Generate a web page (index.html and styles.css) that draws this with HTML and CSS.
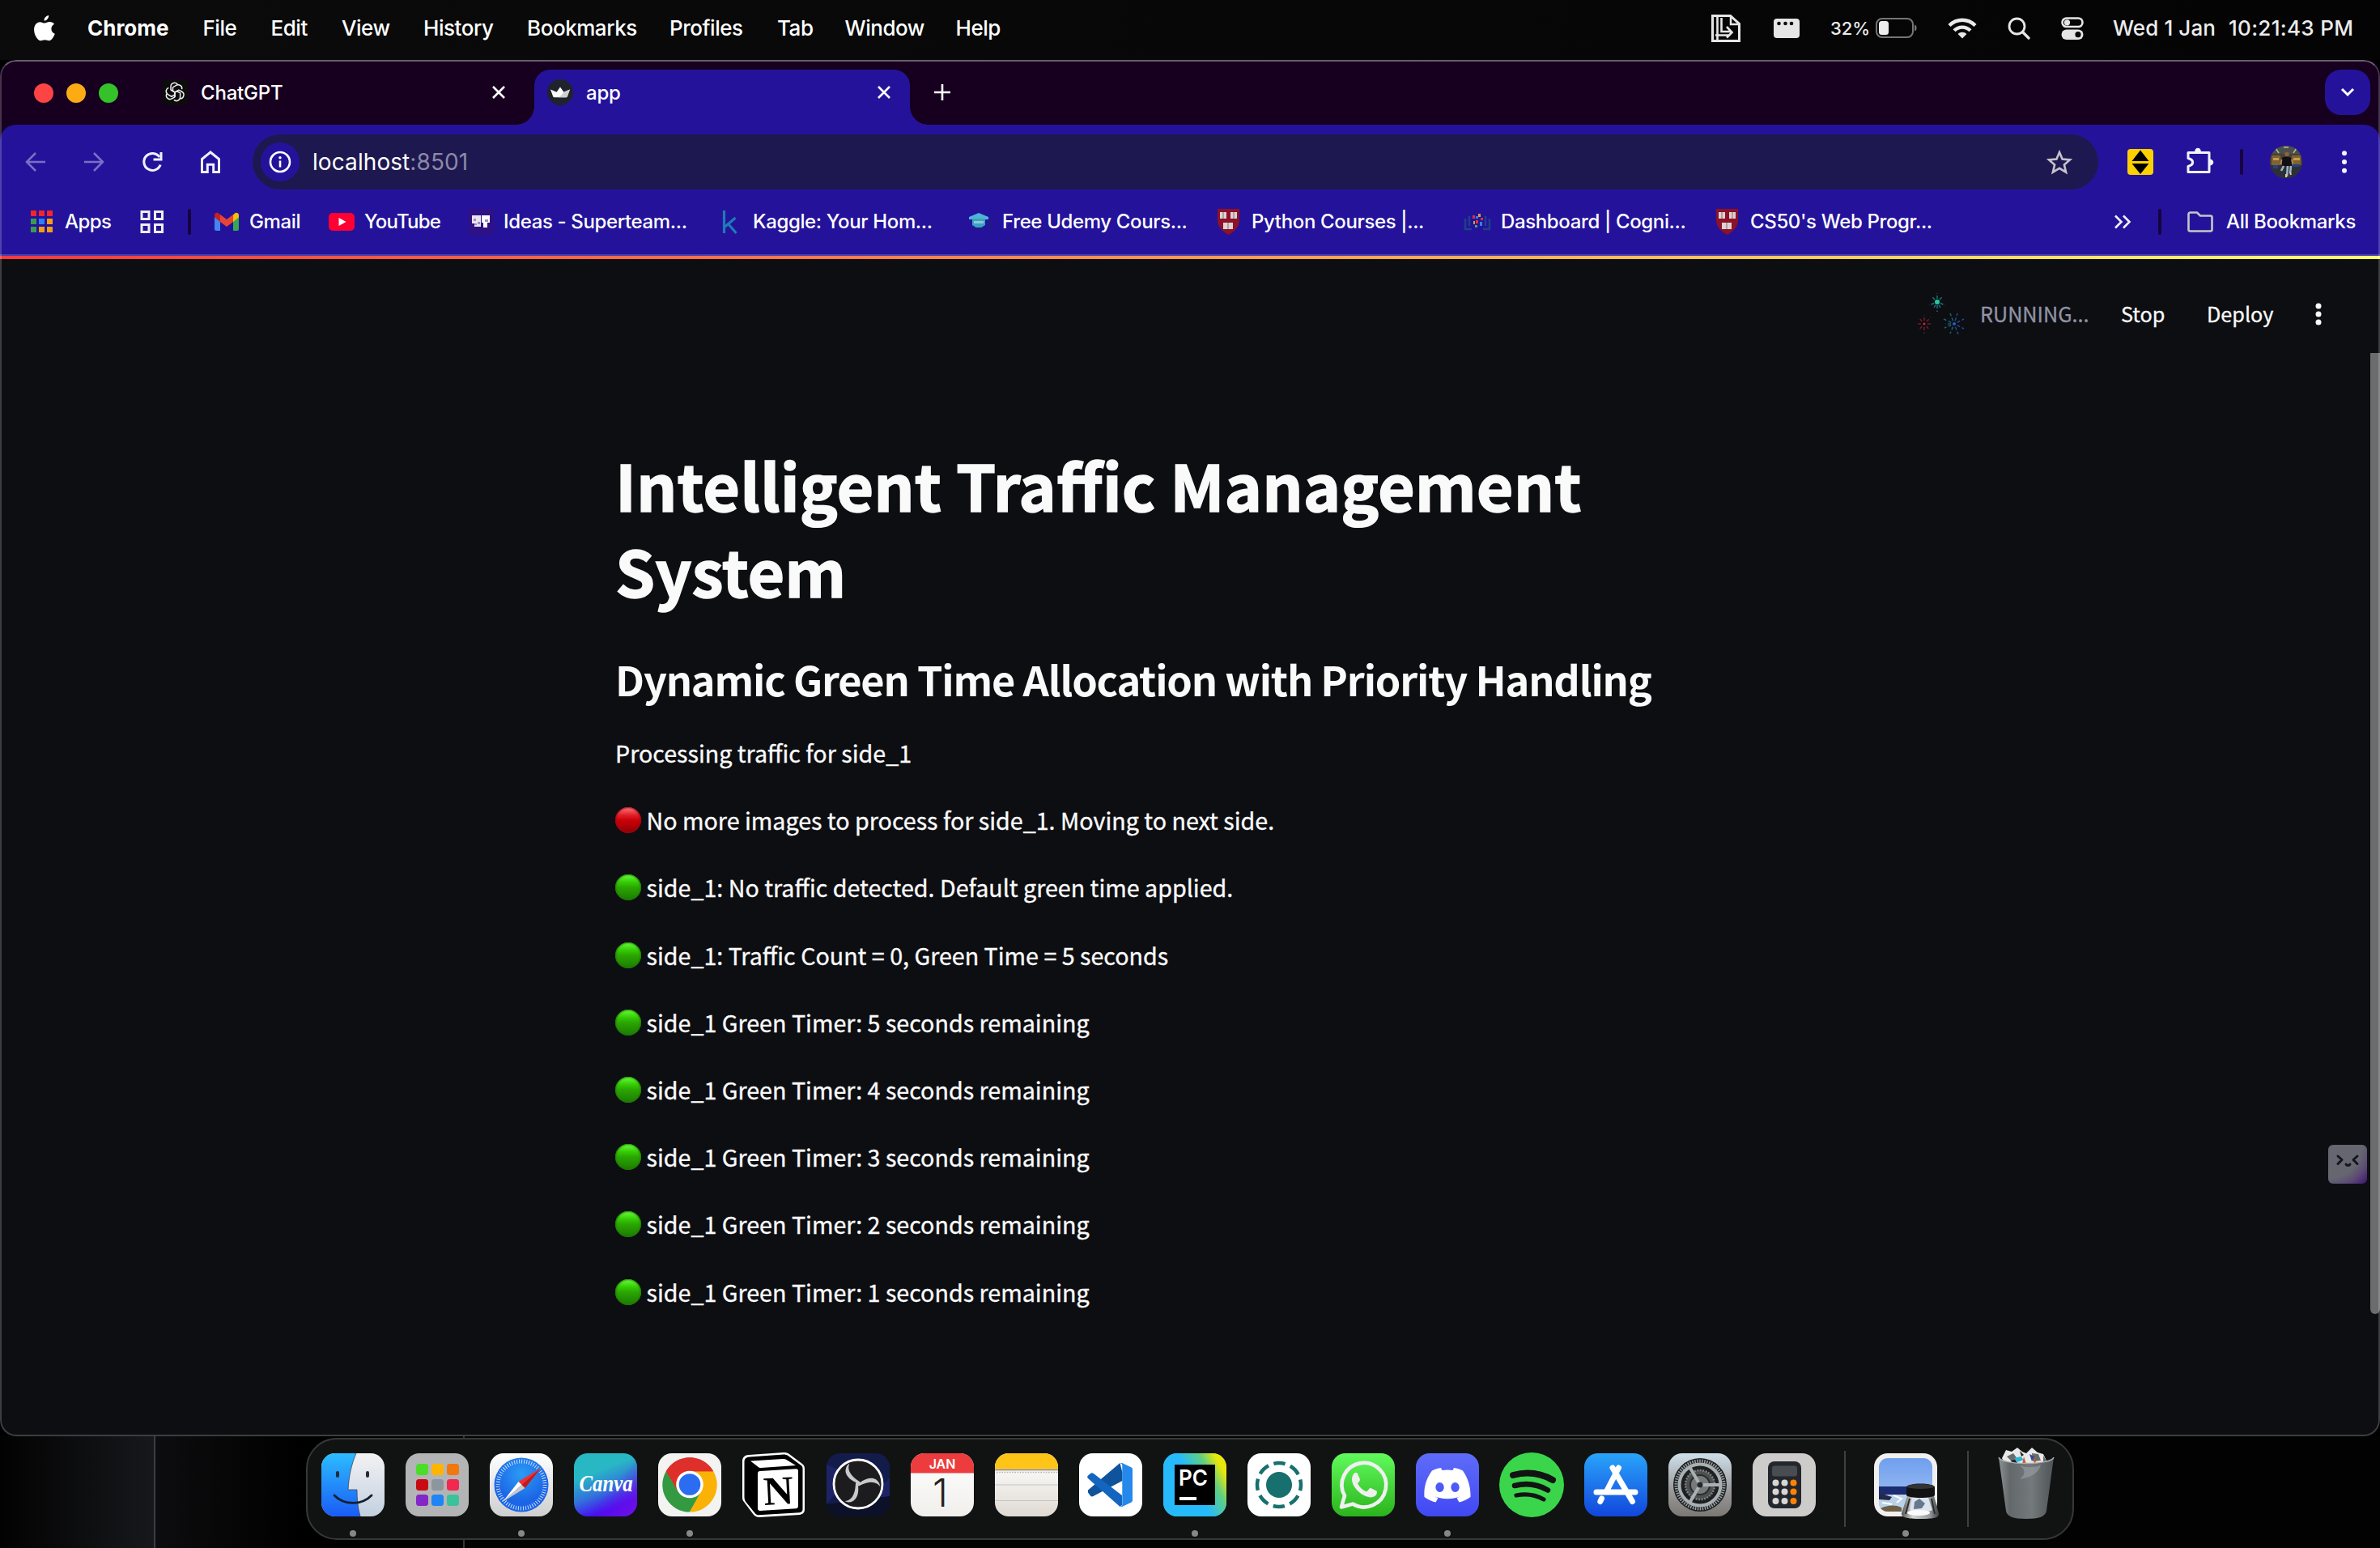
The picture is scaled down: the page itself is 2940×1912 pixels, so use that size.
FILE: index.html
```html
<!DOCTYPE html>
<html lang="en">
<head>
<meta charset="utf-8">
<title>app</title>
<link rel="stylesheet" href="styles.css">
</head>
<body>
<header class="menubar">
  <svg class="apple" viewBox="0 0 26 32"><path fill="#fff" d="M18.2 0c.3 2.900-2.300 6.700-5.700 6.600C12.200 3.600 15 .3 18.200 0zM25 10.800c-2.600 1.600-3.700 3.600-3.600 6 .1 2.900 1.700 4.900 4.400 6-.8 2.400-2.900 6.300-5 7.800-2.700 1.800-4.600-.3-7.400-.3s-4.400 2-7 .4C3.500 28.900-.2 23.300.1 16.900.3 11.700 3.500 8.200 7.300 8.200c2.400 0 4 1.400 5.900 1.400 1.800 0 3.300-1.600 6.300-1.500 2.300.1 4.300 1 5.500 2.700z"/></svg>
  <nav class="menus">
    <b style="width:142.500px">Chrome</b><span style="width:84px">File</span><span style="width:87.500px">Edit</span><span style="width:101px">View</span><span style="width:128px">History</span><span style="width:176px">Bookmarks</span><span style="width:133px">Profiles</span><span style="width:83.500px">Tab</span><span style="width:137px">Window</span><span>Help</span>
  </nav>
  <div class="status">
    <svg class="st-doc" viewBox="0 0 36 34" fill="none" stroke="#e6e6e6"><path d="M1.500 1.500h22l11 10v21h-33z" stroke-width="3"/><path d="M24 1v11h11" stroke-width="2.500"/><path d="M7.500 3v28M12.500 4v17h12M19 15l6.500 7-6.500 6.500M5 25.500h18" stroke-width="2.600"/></svg>
    <svg class="st-key" viewBox="0 0 32 24"><rect width="32" height="24" rx="4" fill="#e6e6e6"/><g fill="#0a0a0a"><circle cx="6.500" cy="6" r="2.300"/><circle cx="14.500" cy="6" r="2.300"/><circle cx="22" cy="6" r="2.300"/></g></svg>
    <span class="pct">32%</span>
    <svg class="st-bat" viewBox="0 0 52 26"><rect x="1" y="1" width="45" height="23" rx="7" fill="none" stroke="#757575" stroke-width="2"/><rect x="4" y="4" width="12" height="17" rx="3.500" fill="#ededed"/><path d="M48 8.500c3.500 1 3.500 7 0 8z" fill="#757575"/></svg>
    <svg class="st-wifi" viewBox="0 0 36 26" fill="none" stroke="#e9e9e9" stroke-width="4.400"><path d="M2 9.500c9-9 23-9 32 0"/><path d="M8 15.800c5.600-5.600 14.400-5.600 20 0"/><path d="M18 25.500l-5.400-5.600c3-3 7.800-3 10.800 0z" fill="#e9e9e9" stroke="none"/></svg>
    <svg class="st-search" viewBox="0 0 28 28" fill="none" stroke="#e6e6e6" stroke-width="2.800"><circle cx="11.500" cy="11.500" r="9.500"/><path d="M18.500 18.500l7.500 7.500" stroke-width="3.400" stroke-linecap="round"/></svg>
    <svg class="st-cc" viewBox="0 0 28 28"><rect x="1.500" y="1.500" width="25" height="10.500" rx="5.200" fill="none" stroke="#e6e6e6" stroke-width="2.600"/><circle cx="7.500" cy="6.800" r="3.600" fill="#e6e6e6"/><rect x=".5" y="15.500" width="27" height="12.500" rx="6.200" fill="#e6e6e6"/><circle cx="21" cy="21.700" r="3.600" fill="#0a0a0a"/></svg>
    <span class="date">Wed 1 Jan</span><span class="clock">10:21:43 PM</span>
  </div>
</header>

<main class="window">
  <div class="tabstrip">
    <div class="lights"><i class="r"></i><i class="y"></i><i class="g"></i></div>
    <div class="tab">
      <svg class="fav" viewBox="0 0 32 32"><rect width="32" height="32" rx="6" fill="#0c0c0c"/><g fill="none" stroke="#ececec" stroke-width="1.500" stroke-linejoin="round"><g id="petal"><path d="M11 13.200v-4.400a4.600 4.600 0 0 1 8.600-2.200M11 13.200l5 2.900 5.200-3M13.500 14.600V9.800l4.600-2.600a4.600 4.600 0 0 1 6.600 5"/></g><use href="#petal" transform="rotate(120 16 16)"/><use href="#petal" transform="rotate(240 16 16)"/></g></svg>
      <span>ChatGPT</span>
      <svg class="x" viewBox="0 0 16 16"><path d="M1 1l14 14M15 1L1 15" stroke="#fff" stroke-width="2.600"/></svg>
    </div>
    <div class="tab active">
      <svg class="fav" viewBox="0 0 32 32"><circle cx="16" cy="16" r="16" fill="#20232b"/><path d="M4 12.500l7.600 3.200L16 9.500l4.400 6.200L28 12.500l-3.200 8.700a1.500 1.500 0 0 1-1.400 1H8.600a1.500 1.500 0 0 1-1.400-1z" fill="#fff"/><path d="M28 12.500L17 20l3.400-4.300zM28 12.500l-3.200 8.700a1.500 1.500 0 0 1-1.400 1H14z" fill="#cfcfcf"/></svg>
      <span>app</span>
      <svg class="x" viewBox="0 0 16 16"><path d="M1 1l14 14M15 1L1 15" stroke="#fff" stroke-width="2.600"/></svg>
    </div>
    <svg class="plus" viewBox="0 0 20 20"><path d="M10 0v20M0 10h20" stroke="#fff" stroke-width="2.600"/></svg>
    <div class="tabsearch"><svg viewBox="0 0 18 12"><path d="M2 2l7 7 7-7" fill="none" stroke="#fff" stroke-width="3"/></svg></div>
  </div>

  <div class="toolbar">
    <svg class="ic back" viewBox="0 0 26 26" fill="none" stroke="#7a6fc6" stroke-width="2.500"><path d="M25 13H2.500M13 2L2 13l11 11"/></svg>
    <svg class="ic fwd" viewBox="0 0 26 26" fill="none" stroke="#7a6fc6" stroke-width="2.500"><path d="M1 13h22.500M13 2l11 11-11 11"/></svg>
    <svg class="ic reload" viewBox="0 0 26 26" fill="none" stroke="#f0f0fa" stroke-width="3"><path d="M23.200 16.500a10.500 10.500 0 1 1-1.200-9.500"/><path d="M24 1v9h-9.500" /></svg>
    <svg class="ic home" viewBox="0 0 26 30" fill="none" stroke="#f0f0fa" stroke-width="3"><path d="M2.500 27.500V11.500L13 3l10.500 8.500v16h-6.800v-9.300H9.300v9.300z"/></svg>
    <div class="omnibox">
      <span class="info"><svg viewBox="0 0 28 28"><circle cx="14" cy="14" r="12" fill="none" stroke="#fff" stroke-width="2.600"/><path d="M14 12.500v8" stroke="#fff" stroke-width="2.600"/><circle cx="14" cy="8.800" r="1.700" fill="#fff"/></svg></span>
      <span class="url">localhost<em>:8501</em></span>
      <svg class="star" viewBox="0 0 32 30"><path d="M16 3l3.600 8.600 9.400.8-7.100 6.100 2.200 9.200L16 22.800l-8.100 4.900 2.200-9.200L3 12.400l9.400-.8z" fill="none" stroke="#c4c3cc" stroke-width="2.600"/></svg>
    </div>
    <svg class="ext" viewBox="0 0 32 32"><rect width="32" height="32" rx="4" fill="#ffd000"/><path d="M16 1.500L26.500 15h-21zM5.500 18h21L16 31z" fill="#000"/></svg>
    <svg class="puzzle" viewBox="0 0 34 34"><path d="M3 6.500h26v24H3v-7c7.500-2 7.500-8 0-10z" fill="none" stroke="#f3f3fb" stroke-width="3" stroke-linejoin="round"/><path d="M11 6c0-7 8-7 8 0zM29 14.500c7 0 7 8 0 8z" fill="#f3f3fb"/></svg>
    <i class="sep"></i>
    <svg class="avatar" viewBox="0 0 40 40"><defs><clipPath id="av"><circle cx="20" cy="20" r="20"/></clipPath></defs><g clip-path="url(#av)"><rect width="40" height="40" fill="#4a4030"/><path d="M0 0h40v10H0z" fill="#4b504e"/><path d="M2 12h11v12H2zM27 12h11v12H27z" fill="#7d6233"/><path d="M4 15h7v3H4zM29 15h8v3h-8z" fill="#c39c4e"/><path d="M7 3l4 6M33 3l-4 6M17 2h6" stroke="#b5baa4" stroke-width="1.500"/><path d="M0 24h40v16H0z" fill="#2c3036"/><path d="M4 24h6v4H4zM28 23h9v3h-9z" fill="#27417c"/><circle cx="21" cy="10.500" r="2.800" fill="#8c6148"/><path d="M15 15c3-2 8-2 11 0l1 10H15z" fill="#101012"/><path d="M14.500 17l-1 6M27 17l1.500 5" stroke="#b98562" stroke-width="1.800"/><path d="M17 25l-3 6M22 25l-1 13M26 25l-1 9" stroke="#9fb1c2" stroke-width="2.600"/><path d="M20 35v4M25 33l1 3" stroke="#d9c9b8" stroke-width="2"/></g></svg>
    <svg class="kebab" viewBox="0 0 8 28" fill="#f3f3fb"><circle cx="4" cy="3.200" r="3"/><circle cx="4" cy="14" r="3"/><circle cx="4" cy="24.800" r="3"/></svg>
  </div>

  <div class="bookmarks">
    <div class="bm apps"><svg width="28" height="28" viewBox="0 0 28 28"><path fill="#f3252d" d="M0 0h7v7H0zM10 0h7v7h-7zM20 0h7v7h-7z"/><path fill="#3a9a50" d="M0 10h7v7H0zM0 20h7v7H0z"/><path fill="#2c7df6" d="M10 10h7v7h-7z"/><path fill="#f79b16" d="M20 10h7v7h-7zM10 20h7v7h-7zM20 20h7v7h-7z"/></svg><span>Apps</span></div>
    <svg class="grid" viewBox="0 0 30 28" fill="none" stroke="#eee" stroke-width="3"><path d="M2 1.500h9v9H2zM18.500 1.500h9v9h-9zM2 17.500h9v9H2zM18.500 17.500h9v9h-9z"/></svg>
    <i class="sep"></i>
    <div class="bm gmail"><svg width="30" height="22" viewBox="0 0 30 22"><path fill="#4285f4" d="M0 4v16a2 2 0 0 0 2 2h5V9z"/><path fill="#34a853" d="M23 9v13h5a2 2 0 0 0 2-2V4z"/><path fill="#fbbc04" d="M23 2.500V11l7-5.500V3c0-2.700-3-4-5-2.500z"/><path fill="#ea4335" d="M7 11V2l8 6 8-6v9l-8 6z"/><path fill="#c5221f" d="M0 3v2.500L7 11V2L5 .5C3-1 0 .3 0 3z"/></svg><span>Gmail</span></div>
    <div class="bm yt"><svg width="32" height="22" viewBox="0 0 32 22"><rect width="32" height="22" rx="5" fill="#ff0033"/><path d="M12.500 6l9 5-9 5z" fill="#fff"/></svg><span>YouTube</span></div>
    <div class="bm ideas"><svg width="32" height="32" viewBox="0 0 32 32"><rect width="32" height="32" rx="2" fill="#2e1185"/><path fill="#e9e3ee" d="M5 8h11v14H8v-4H5z"/><path fill="#fff" d="M17 8h10v9h-3v6h-5v-6h-2z"/><path fill="#a08fc0" d="M7 12h3v3H7zM12 16h3v3h-3zM21 13h4v3h-4zM8 18h3v2H8z"/></svg><span>Ideas - Superteam...</span></div>
    <div class="bm wide k"><svg width="32" height="32" viewBox="0 0 32 32"><path d="M9.500 2v28M23.500 11L10 22.500M14.500 18.500l10 11.500" fill="none" stroke="#1e7ab8" stroke-width="3.200"/></svg><span>Kaggle: Your Hom...</span></div>
    <div class="bm wide"><svg width="32" height="32" viewBox="0 0 32 32"><path d="M4 10l12-5 12 5v3H4z" fill="#4fb5d8"/><path d="M8 12v8l8 5 8-5v-8z" fill="#3ba2c6"/><path d="M10 15h12v3H10z" fill="#8cc9cf"/><path d="M30 13v13M11 24h10" stroke="#1c2070" stroke-width="2"/></svg><span>Free Udemy Cours...</span></div>
    <div class="bm wide"><svg width="32" height="32" viewBox="0 0 32 32"><g id="shield"><path d="M3 0h27v13c0 9-6 15-13.500 19C9 28 3 22 3 13z" fill="#8e1127"/><path fill="#dcd3d3" d="M6 4h8v8H6zM19 4h8v8h-8zM10 17h12v8H10z"/><path d="M10 4v8M23 4v8M16 17v8" stroke="#9c8388" stroke-width="1.300"/></g></svg><span>Python Courses |...</span></div>
    <div class="bm wide"><svg width="32" height="32" viewBox="0 0 32 32"><path d="M1 12v13h8M31 12v13h-8M6 9v12M26 9v12" fill="none" stroke="#1e4088" stroke-width="2.500"/><path fill="#d33443" d="M10 8h3v4h-3zM14 14h3v4h-3zM20 11h3v3h-3z"/><path fill="#d59b3c" d="M17 6h3v4h-3zM11 15h2v4h-2z"/><path fill="#397fd0" d="M14 9h3v3h-3zM19 16h3v5h-3z"/><path fill="#4aa36b" d="M13 20h3v3h-3z"/></svg><span>Dashboard | Cogni...</span></div>
    <div class="bm wide"><svg width="32" height="32" viewBox="0 0 32 32"><use href="#shield"/></svg><span>CS50's Web Progr...</span></div>
    <svg class="more" viewBox="0 0 22 18" fill="none" stroke="#f0f0fa" stroke-width="2.600"><path d="M2 1.500L9.500 9 2 16.500M12 1.500L19.500 9 12 16.500"/></svg>
    <i class="sep sep2"></i>
    <div class="bm all"><svg width="32" height="26" viewBox="0 0 32 26"><path d="M1.500 22.500v-19a2 2 0 0 1 2-2H12l4 4h12.500a2 2 0 0 1 2 2v15a2 2 0 0 1-2 2h-25a2 2 0 0 1-2-2z" fill="none" stroke="#c6c6c6" stroke-width="2.600"/></svg><span>All Bookmarks</span></div>
  </div>
  <div class="progress"></div>

  <section class="page">
    <div class="apphead">
      <svg class="sparks" viewBox="0 0 64 52" fill="none"><g stroke-width="1.500" stroke-dasharray="0 4 4 2.500 4"><path stroke="#1d6f7c" d="M27 11V0M27 11v12M27 11l7-7M27 11l-7-7M27 11l10 4M27 11l-10 4M27 11l5 9M27 11l-5 9"/><path stroke="#6e1c28" d="M11 38V27M11 38v12M11 38l8-8M11 38l-7-8M11 38H1M11 38h10M11 38l7 8M11 38l-7 8"/><path stroke="#1a646e" d="M48 38l-5-13M48 38l-13-6M48 38l-12 5M48 38l-5 12"/><path stroke="#244a94" d="M48 38l4-13M48 38l12-6M48 38l12 6M48 38l5 13M48 38h-11"/></g><circle cx="27" cy="11" r="3" fill="#27c79c"/><circle cx="11" cy="38" r="1.500" fill="#c82b37"/><circle cx="48" cy="38" r="2" fill="#2560c4"/></svg>
      <span class="running">RUNNING...</span><span class="stop">Stop</span><span class="deploy">Deploy</span>
      <svg class="kebab" viewBox="0 0 8 28" fill="#fafafa"><circle cx="4" cy="4" r="3.500"/><circle cx="4" cy="14" r="3.500"/><circle cx="4" cy="24" r="3.500"/></svg>
    </div>
    <article>
      <h1>Intelligent Traffic Management<br>System</h1>
      <h2>Dynamic Green Time Allocation with Priority Handling</h2>
      <p>Processing traffic for side_1</p>
      <p><i class="dot red"></i>No more images to process for side_1. Moving to next side.</p>
      <p><i class="dot"></i>side_1: No traffic detected. Default green time applied.</p>
      <p><i class="dot"></i>side_1: Traffic Count = 0, Green Time = 5 seconds</p>
      <p><i class="dot"></i>side_1 Green Timer: 5 seconds remaining</p>
      <p><i class="dot"></i>side_1 Green Timer: 4 seconds remaining</p>
      <p><i class="dot"></i>side_1 Green Timer: 3 seconds remaining</p>
      <p><i class="dot"></i>side_1 Green Timer: 2 seconds remaining</p>
      <p><i class="dot"></i>side_1 Green Timer: 1 seconds remaining</p>
    </article>
    <div class="scrollbar"></div>
    <div class="buddy"><svg viewBox="0 0 48 48" fill="none" stroke="#14161f" stroke-width="3" stroke-linecap="round" stroke-linejoin="round"><path d="M12 14l5 4.500-5 5M36 14l-5 4.500 5 5M22 24c1 2 4 2 5 0"/></svg></div>
  </section>
</main>

<footer class="desk">
  <div class="dock">
    <div class="app on"><svg viewBox="0 0 78 78"><defs><clipPath id="sq"><rect width="78" height="78" rx="17"/></clipPath><linearGradient id="fb" x2="0" y2="1"><stop stop-color="#2cbcff"/><stop offset="1" stop-color="#1a5cf5"/></linearGradient><linearGradient id="fw" x2="0" y2="1"><stop stop-color="#f3f2f3"/><stop offset="1" stop-color="#c3d0e0"/></linearGradient></defs><g clip-path="url(#sq)"><path d="M0 0h78v78H0z" fill="url(#fw)"/><path d="M0 0h43c-6 14-9 28-10 45h11c0 12 1 22 4 33H0z" fill="url(#fb)"/><path d="M43 0c-6 14-9 28-10 45h11c0 12 1 22 4 33" fill="none" stroke="#3a4660" stroke-width=".8"/></g><path d="M20 24v4M57 24v4" stroke="#222b38" stroke-width="4" stroke-linecap="round"/><path d="M16 52c12 12.500 34 12.500 46 0" fill="none" stroke="#14202e" stroke-width="2.800" stroke-linecap="round"/></svg></div>
    <div class="app"><svg viewBox="0 0 78 78"><rect width="78" height="78" rx="17" fill="#b3b4b6"/><g><rect x="13" y="13" width="15" height="14" rx="3.500" fill="#4ade28"/><rect x="32" y="13" width="15" height="14" rx="3.500" fill="#ffb400"/><rect x="51" y="13" width="15" height="14" rx="3.500" fill="#f0780e"/><rect x="13" y="32" width="15" height="14" rx="3.500" fill="#c90a14"/><rect x="32" y="32" width="15" height="14" rx="3.500" fill="#8c979d"/><rect x="51" y="32" width="15" height="14" rx="3.500" fill="#f3284e"/><rect x="13" y="51" width="15" height="14" rx="3.500" fill="#8227c8"/><rect x="32" y="51" width="15" height="14" rx="3.500" fill="#1f84f4"/><rect x="51" y="51" width="15" height="14" rx="3.500" fill="#3ac29a"/></g></svg></div>
    <div class="app on"><svg viewBox="0 0 78 78"><defs><linearGradient id="sw" x2="0" y2="1"><stop stop-color="#fff"/><stop offset="1" stop-color="#cfcfcf"/></linearGradient><radialGradient id="sb" cy=".3"><stop stop-color="#2b9cf5"/><stop offset="1" stop-color="#1c66e6"/></radialGradient></defs><rect width="78" height="78" rx="17" fill="url(#sw)"/><circle cx="39" cy="39" r="33.500" fill="url(#sb)"/><circle cx="39" cy="39" r="29" fill="none" stroke="#d7e8ff" stroke-width="5" stroke-dasharray=".9 2.137"/><path d="M63 18.500L43.500 43l-8-8z" fill="#f0302f"/><path d="M63 18.500L43.500 43l-4-4z" fill="#b91d22"/><path d="M16 60l19.500-25 4 4z" fill="#fff"/><path d="M16 60l27.500-17-4-4z" fill="#c8c8c8"/></svg></div>
    <div class="app"><svg viewBox="0 0 78 78"><defs><linearGradient id="ca" x1=".2" x2=".6" y2="1"><stop offset=".3" stop-color="#28b8c4"/><stop offset=".62" stop-color="#3272dc"/><stop offset=".9" stop-color="#4808f4"/></linearGradient><linearGradient id="cb" x1=".3" y1=".3" x2="1" y2=".9"><stop offset=".4" stop-color="#6a16e4" stop-opacity="0"/><stop offset="1" stop-color="#6e0fe6"/></linearGradient></defs><rect width="78" height="78" rx="17" fill="url(#ca)"/><rect width="78" height="78" rx="17" fill="url(#cb)"/><text x="39.500" y="46.500" text-anchor="middle" textLength="66" lengthAdjust="spacingAndGlyphs" class="canva">Canva</text></svg></div>
    <div class="app on"><svg viewBox="0 0 78 78"><rect width="78" height="78" rx="17" fill="#f3f3f2"/><path d="M39 39L9.800 22.200A33.600 33.600 0 0 1 68.200 22.200z" fill="#df2f2a"/><path d="M39 39L9.800 22.200A33.600 33.600 0 0 0 39 72.600L54 47z" fill="#349a42"/><path d="M68.200 22.200A33.600 33.600 0 0 1 39 72.600L53.500 46 39 22.200z" fill="#fbb206"/><path d="M39 22.200h29.200A33.600 33.600 0 0 0 9.800 22.200L24.500 47z" fill="#df2f2a"/><circle cx="39" cy="38.500" r="16.800" fill="#fff"/><circle cx="39" cy="38.500" r="13.300" fill="#2a6df0"/></svg></div>
    <div class="app"><svg viewBox="0 0 78 78"><path d="M8 2L51-1c3 0 5 .5 7 2l16 12c2 1.500 3 3 3 6v50c0 4-2 6-6 7l-50 3c-3 0-5-1-7-3L2 60c-2-2-2-4-2-7V10c0-5 3-8 8-8z" fill="#fff"/><path d="M9 4.500l42-3c2 0 4 .5 5.500 1.500L72 14.500c2 1.500 2.500 2.500 2.500 4.500v50c0 2-1 4-4 4.300l-50 3c-2 0-3.500-.6-4.700-2L4.300 60C3 58 2.500 56 2.500 54V11c0-4 2-6.200 6.500-6.500z" fill="#000"/><path d="M10 9.500L50 7c2 0 3 0 4.500 1L66 15 23 18c-2 0-3-.5-4.500-2zM19 25c0-2 1-3 3-3l44-2.700c2 0 3 .7 3 2.700v43c0 2-1 3-3 3.200L22 71c-2 0-3-1-3-3z" fill="#fff"/><text x="44.500" y="63" text-anchor="middle" textLength="37" lengthAdjust="spacingAndGlyphs" class="notion" transform="rotate(-3 45 46)">N</text></svg></div>
    <div class="app"><svg viewBox="0 0 78 78"><g clip-path="url(#sq)"><path d="M0 0h78v78H0z" fill="#131b4b"/><path d="M0 14l30 12L0 63zM78 30L50 60l28-6z" fill="#1c2466"/><path d="M0 63l78-10v25H0z" fill="#0c1129"/></g><circle cx="39" cy="38" r="30" fill="#1c1c1f" stroke="#fff" stroke-width="2.800"/><g fill="#c9c9cb"><g id="blade"><path d="M40 37.500l-2.500-1C28 33 23 26 23.500 21c.5-4 2-7 5-8.500-3 6-1 14 11.500 22z"/></g><use href="#blade" transform="rotate(120 39 37.500)"/><use href="#blade" transform="rotate(240 39 37.500)"/><circle cx="39" cy="37.500" r="3"/></g></svg></div>
    <div class="app"><svg viewBox="0 0 78 78"><defs><linearGradient id="cal" x2="0" y2="1"><stop stop-color="#fff"/><stop offset="1" stop-color="#f0efec"/></linearGradient></defs><g clip-path="url(#sq)"><path d="M0 0h78v78H0z" fill="url(#cal)"/><path d="M0 0h78v24.500H0z" fill="#ec3c3e"/></g><text x="39" y="18.800" text-anchor="middle" class="jan">JAN</text><text x="36.500" y="66" text-anchor="middle" class="day">1</text></svg></div>
    <div class="app"><svg viewBox="0 0 78 78"><defs><linearGradient id="no" x2="0" y2="1"><stop offset=".3" stop-color="#f7f6f4"/><stop offset="1" stop-color="#dfdad2"/></linearGradient></defs><g clip-path="url(#sq)"><path d="M0 0h78v78H0z" fill="url(#no)"/><path d="M0 0h78v19.500H0z" fill="#fec417"/><path d="M0 20.500h78" stroke="#8b8577" stroke-width="1.500"/><path d="M2 23.500h76" stroke="#b5b1aa" stroke-width="1.600" stroke-dasharray="1.600 1.600"/><path d="M0 39h78M0 58.500h78" stroke="#c6c3be" stroke-width="1.200"/></g></svg></div>
    <div class="app"><svg viewBox="0 0 78 78"><rect width="78" height="78" rx="17" fill="#fff"/><path d="M11 48.500v-3L50.500 12l3 12v10L17.500 53c-1.500.8-2.500.5-3.500-.5z" fill="#0f539c"/><path d="M11 27.500L14 25c1-1 2.300-1.200 3.500-.3L53 52v12l-2.500 2L11 31c-1-1-1-2.500 0-3.500z" fill="#1365bf"/><path d="M50.500 12.500c1.200-.7 2-.7 3.200-.2l10.500 5c1.200.6 1.800 1.500 1.800 2.700v38c0 1.200-.6 2.200-1.800 2.700l-10.500 5c-1.200.5-2 .3-3-.4 1.500.4 2.600-.3 2.600-2V15c0-1.700-1.200-2.800-2.800-2.500z" fill="#2489ea"/></svg></div>
    <div class="app on"><svg viewBox="0 0 78 78"><defs><linearGradient id="pc" x1=".25" y1=".5" x2="1" y2=".1"><stop stop-color="#27bafb"/><stop offset=".25" stop-color="#27bafb"/><stop offset=".6" stop-color="#5fcf82"/><stop offset=".85" stop-color="#e9e80a"/></linearGradient></defs><rect width="78" height="78" rx="17" fill="#27bafb"/><rect width="78" height="78" rx="17" fill="url(#pc)"/><path d="M14 14h50v50H14z"/><text x="19" y="39.500" textLength="36" lengthAdjust="spacingAndGlyphs" class="pycharm">PC</text><path d="M20 54h21v4H20z" fill="#fff"/></svg></div>
    <div class="app"><svg viewBox="0 0 78 78"><rect width="78" height="78" rx="17" fill="#fff"/><circle cx="39" cy="39" r="16" fill="#17706d"/><circle cx="39" cy="39" r="27" fill="none" stroke="#17706d" stroke-width="4.500" stroke-dasharray="14.500 6.706" stroke-dashoffset="7.250"/></svg></div>
    <div class="app"><svg viewBox="0 0 78 78"><defs><linearGradient id="wa" x2="0" y2="1"><stop stop-color="#60fa5c"/><stop offset="1" stop-color="#2bb41c"/></linearGradient></defs><rect width="78" height="78" rx="17" fill="url(#wa)"/><path d="M12 66.500l4-14.200A27.300 27.300 0 1 1 26 62.600z" fill="none" stroke="#f0f0f0" stroke-width="4.600" stroke-linejoin="round"/><path d="M29 24c1.500-.3 2.500 0 3.200 1.500l2.600 6.200c.4 1.200 0 2-.7 3l-2 2.500c2.600 5 6 8 11 10.300l3.200-3.600c.8-1 1.600-1 2.600-.6l6 3c1.200.6 1.300 1.300 1 2.800-.7 3.500-4.500 5.700-8 5.400C36.500 53 25.500 42 25 32.500c0-3.500 1.700-7.500 4-8.500z" fill="#f0f0f0"/></svg></div>
    <div class="app on"><svg viewBox="0 0 78 78"><defs><linearGradient id="di" x2="0" y2="1"><stop stop-color="#5f6cf8"/><stop offset="1" stop-color="#4148f4"/></linearGradient></defs><rect width="78" height="78" rx="17" fill="url(#di)"/><path fill="#fff" fill-rule="evenodd" d="M31 18l1.500 3c4-.7 9-.7 13 0l1.500-3c4 .7 7.500 1.700 11 3.400C64 30 68 41 67.500 54c-4.500 3.300-9 5.200-14 6.500l-3-5.200 4.500-2c-10 4-21.500 4-31.500 0l4 2-3 5.200c-5-1.300-9.500-3.200-14-6.500C9.500 41 13.500 30 20 21.400 23.500 19.700 27 18.700 31 18zm-1.500 18a5.200 6 0 1 0 .1 12 5.200 6 0 0 0-.1-12zm19 0a5.200 6 0 1 0 .1 12 5.200 6 0 0 0-.1-12z"/></svg></div>
    <div class="app"><svg viewBox="0 0 78 78"><circle cx="39" cy="39" r="40" fill="#3bd54c"/><path d="M16 27c17-4.500 34-2.500 49 6" fill="none" stroke="#111413" stroke-width="8" stroke-linecap="round"/><path d="M18 40c14-3.500 28-2 41 5.500" fill="none" stroke="#111413" stroke-width="6.600" stroke-linecap="round"/><path d="M20 52c12-2.500 23-1.200 34 5" fill="none" stroke="#111413" stroke-width="5.200" stroke-linecap="round"/></svg></div>
    <div class="app"><svg viewBox="0 0 78 78"><defs><linearGradient id="as" x2="0" y2="1"><stop stop-color="#29a4fa"/><stop offset="1" stop-color="#1246dc"/></linearGradient></defs><rect width="78" height="78" rx="17" fill="url(#as)"/><g fill="none" stroke="#fff" stroke-width="7" stroke-linecap="round"><path d="M42.500 18L28 46M35 18l24.500 41.500M15 48h48M21.500 56l-1.700 3.500"/></g></svg></div>
    <div class="app"><svg viewBox="0 0 78 78"><defs><linearGradient id="se" x2="0" y2="1"><stop stop-color="#cfe0ea"/><stop offset=".6" stop-color="#999"/><stop offset="1" stop-color="#7b7874"/></linearGradient></defs><rect width="78" height="78" rx="17" fill="url(#se)"/><circle cx="39" cy="39" r="33" fill="#1d1f20"/><circle cx="39" cy="39" r="29.500" fill="none" stroke="#9ba2a5" stroke-width="4" stroke-dasharray="1.500 1.500"/><circle cx="39" cy="39" r="25.500" fill="none" stroke="#a9b0b3" stroke-width="4"/><circle cx="39" cy="39" r="18" fill="#4d5051" stroke="#7c8183" stroke-width="2.500" stroke-dasharray="2 1.500"/><circle cx="39" cy="39" r="12" fill="#77797a" stroke="#2a2c2d" stroke-width="2"/><path d="M39 39h25M39 39L26.500 17.500M39 39L26.500 60.500" stroke="#a9b0b3" stroke-width="4"/><circle cx="39" cy="39" r="3.500" fill="#24282a"/></svg></div>
    <div class="app"><svg viewBox="0 0 78 78"><rect width="78" height="78" rx="17" fill="#cdccca"/><rect x="19" y="10" width="41" height="58" rx="8" fill="#23272d"/><rect x="24" y="15.500" width="31" height="13" rx="3" fill="#494d52"/><g fill="#d8d6d4"><circle cx="28.500" cy="36.500" r="4"/><circle cx="39.500" cy="36.500" r="4"/><circle cx="28.500" cy="47.500" r="4"/><circle cx="39.500" cy="47.500" r="4"/><circle cx="28.500" cy="59" r="4"/><circle cx="39.500" cy="59" r="4"/></g><g fill="#fd8208"><circle cx="50.500" cy="36.500" r="4"/><circle cx="50.500" cy="47.500" r="4"/><circle cx="50.500" cy="59" r="4"/></g></svg></div>
    <i class="div a"></i>
    <div class="app on"><svg viewBox="0 0 78 78"><defs><linearGradient id="sky" x2="0" y2="1"><stop stop-color="#6f9fee"/><stop offset="1" stop-color="#a9c4f3"/></linearGradient><linearGradient id="glass"><stop stop-color="#555"/><stop offset=".3" stop-color="#d4d4d4"/><stop offset=".75" stop-color="#989da2"/><stop offset="1" stop-color="#3c3c3c"/></linearGradient></defs><rect width="78" height="78" rx="17" fill="#f1f0ef"/><svg x="6" y="6" width="66" height="66"><rect width="66" height="66" rx="11" fill="url(#sky)"/><path d="M0 35h66v11H0z" fill="#1c2c70"/><path d="M0 45h66v10c0 6-5 11-11 11H11C5 66 0 61 0 55z" fill="#b9d2ea"/><path d="M2 62c8-4 18-5 26-1v5H11c-4 0-7-2-9-4z" fill="#6e6046"/><path d="M0 45c5-2 8 1 16 3l-3 4-13-1z" fill="#24284a"/><path d="M18 46l10 4-6 5M4 55l12 2" stroke="#fff" stroke-width="2" fill="none"/></svg><path d="M41 53h33l6 21c1 5-4 7-22 7s-25-2-24-7z" fill="url(#glass)"/><path d="M47 55h20l5 15c-6 4-22 4-28 0z" fill="#dbe4ee"/><path d="M50 60l6-4 7 6-4 6-10 1z" fill="#66788e"/><path d="M44 56l-5 19M71 56l4 19" stroke="#2c2c2e" stroke-width="2"/><ellipse cx="55" cy="73.500" rx="14" ry="3.500" fill="#fafafa"/><path d="M40 42c0-6 35-6 35 0v10c-3 4-32 4-35 0z" fill="#121212"/><ellipse cx="57.500" cy="41" rx="17" ry="3" fill="#333"/></svg></div>
    <i class="div b"></i>
    <div class="app trash"><svg viewBox="0 0 78 90"><defs><linearGradient id="tr"><stop stop-color="#8c9194"/><stop offset=".2" stop-color="#63686b"/><stop offset=".6" stop-color="#74797c"/><stop offset="1" stop-color="#4e5356"/></linearGradient></defs><path d="M9 14L14 4l7 2 7-5 6 5 5 2 7-7 7 6 7 2 5 10-9 9H16z" fill="#e9e9e9"/><path d="M15 12l8-4 6 8-7 3zM46 8l8 1 3 8-10 1zM60 11l4 6-4 3z" fill="#6b6b6b"/><path d="M24 14l8-2 4 4-8 3z" fill="#23b8d4"/><path d="M43 9l6 3-3 6z" fill="#2c4a9c"/><path d="M36 12l3 9-5 1zM48 14l4 3-3 4z" fill="#d2552c"/><path d="M20 17l5-1 4 5-6 1zM31 5l5 5-3 2z" fill="#222"/><path d="M5 13c3 10 65 10 68 0l-9 66c-1 7-9 10-25 10s-24-3-25-10z" fill="url(#tr)"/><path d="M5 13c3 10 65 10 68 0" fill="none" stroke="#a9aeb1" stroke-width="1.500"/><path d="M31 23c12 4 22 2 26-1-2 10-12 16-26 18 8-6 7-12 0-17z" fill="#9aa0a3" opacity=".6"/></svg></div>
  </div>
</footer>
</body>
</html>
```
FILE: styles.css
```css
* { box-sizing: border-box; }
body {
  margin: 0;
  width: 2940px;
  height: 1912px;
  overflow: hidden;
  background: #000;
  color: #fff;
  font-family: Inter, "Liberation Sans", sans-serif;
  font-size: 24px;
  display: flex;
  flex-direction: column;
  white-space: nowrap;
}
svg { display: block; flex: none; overflow: visible; }
i, em { font-style: normal; }

/* system menu bar */
.menubar {
  height: 74px;
  padding: 0 34px 5px 42px;
  display: flex;
  align-items: center;
  justify-content: space-between;
  background: linear-gradient(90deg, #0b0b0b, #040404);
  font-size: 26px;
}
.apple { width: 26px; height: 32px; margin-right: 40px; }
.menus { display: flex; flex: 1; font-weight: 500; letter-spacing: -.45px; }
.menus > * { flex: none; }
.menus b { font-weight: 700; letter-spacing: 0; }
.status { display: flex; align-items: center; color: #ececec; }
.st-doc { width: 36px; height: 34px; margin-right: 41px; }
.st-key { width: 32px; height: 24px; margin-right: 38px; }
.pct { font-size: 22px; font-weight: 500; width: 56px; }
.st-bat { width: 52px; height: 26px; margin-right: 37px; }
.st-wifi { width: 36px; height: 26px; margin-right: 38px; }
.st-search { width: 28px; height: 28px; margin-right: 38px; }
.st-cc { width: 28px; height: 28px; margin-right: 36px; }
.date { width: 143px; font-weight: 500; letter-spacing: .1px; }
.clock { width: 153px; font-weight: 500; letter-spacing: .3px; }

/* browser window */
.window {
  position: relative;
  height: 1700px;
  border-radius: 20px;
  overflow: hidden;
  background: #17001f;
  display: flex;
  flex-direction: column;
}
.window::after {
  content: "";
  position: absolute;
  inset: 0;
  border: 2px solid rgba(255, 255, 255, .2);
  border-top-color: rgba(255, 255, 255, .36);
  border-radius: 20px;
  pointer-events: none;
}
.tabstrip { height: 80px; padding: 12px 12px 0 42px; display: flex; align-items: flex-start; }
.lights { display: flex; gap: 16px; margin-top: 17px; }
.lights i { width: 24px; height: 24px; border-radius: 50%; }
.lights .r { background: #fc4444; }
.lights .y { background: #fdab15; }
.lights .g { background: #35c12a; }
.tab {
  display: flex;
  align-items: center;
  height: 56px;
  width: 424px;
  margin-left: 54px;
  font-weight: 500;
  letter-spacing: -.2px;
}
.fav { width: 32px; height: 32px; margin-right: 16px; }
.x { width: 16px; height: 16px; margin-left: auto; }
.tab.active {
  position: relative;
  width: 464px;
  height: 68px;
  margin-left: 36px;
  padding: 0 24px 12px 16px;
  border-radius: 20px 20px 0 0;
  background: #24139a;
}
.tab.active::before, .tab.active::after {
  content: "";
  position: absolute;
  bottom: 0;
  width: 22px;
  height: 22px;
}
.tab.active::before { right: 100%; background: radial-gradient(circle at 0 0, transparent 21.500px, #24139a 22px); }
.tab.active::after { left: 100%; background: radial-gradient(circle at 100% 0, transparent 21.500px, #24139a 22px); }
.plus { width: 20px; height: 20px; margin: 18px 0 0 30px; }
.tabsearch {
  width: 56px;
  height: 56px;
  margin-left: auto;
  border-radius: 20px;
  background: #24139a;
  display: grid;
  place-items: center;
}
.tabsearch svg { width: 18px; height: 12px; }

.toolbar {
  height: 92px;
  padding-left: 31px;
  display: flex;
  align-items: center;
  background: #24139a;
  border-radius: 20px 20px 0 0;
}
.ic { width: 26px; height: 26px; margin-right: 46px; }
.ic.home { height: 30px; margin-right: 39px; }
.omnibox {
  width: 2280px;
  height: 68px;
  border-radius: 34px;
  background: #1e1850;
  display: flex;
  align-items: center;
  padding: 0 32px 0 10px;
}
.info { width: 48px; height: 48px; border-radius: 50%; background: #24139a; display: grid; place-items: center; }
.info svg { width: 28px; height: 28px; }
.url { font-size: 28px; margin-left: 16px; letter-spacing: .08px; }
.url em { color: #8c89a6; }
.star { width: 32px; height: 30px; margin-left: auto; }
.ext { width: 32px; height: 32px; margin-left: 36px; }
.puzzle { width: 34px; height: 34px; margin: 0 33px 2px 40px; }
.sep { width: 4px; height: 32px; border-radius: 2px; background: #16043f; }
.avatar { width: 40px; height: 40px; margin: 0 48px 0 33px; }
.kebab { width: 8px; height: 28px; }

.bookmarks {
  height: 68px;
  padding: 0 28px 13px 38px;
  display: flex;
  align-items: center;
  background: #24139a;
  font-weight: 500;
  letter-spacing: -.36px;
}
.bm { display: flex; align-items: center; flex: none; }
.bm svg { margin-right: 13px; }
.apps { width: 135px; letter-spacing: -.6px; }
.apps svg { margin-right: 14px; }
.grid { width: 30px; height: 28px; margin-right: 29px; }
.gmail { width: 141px; margin-left: 29px; }
.yt { width: 172px; letter-spacing: -.8px; }
.yt svg { margin-right: 12px; }
.ideas { width: 307px; }
.ideas svg { margin-right: 12px; }
.bm.wide { width: 308px; }
.more { width: 22px; height: 18px; margin-left: auto; margin-right: 33px; }
.sep2 { margin-right: 32px; }
.all { width: 210px; }
.all svg { margin-right: 16px; }
.progress {
  height: 6px;
  border-top: 2px solid #4a3cae;
  background: linear-gradient(90deg, #ff383f, #ff7a4e 35%, #ffb558 65%, #fffd73);
}

/* app page */
.page {
  position: relative;
  flex: 1;
  background: #0d0e12;
  color: #fafafa;
  font-family: "Noto Sans CJK SC", "Noto Sans", sans-serif;
}
.apphead {
  height: 136px;
  padding-right: 72px;
  display: flex;
  align-items: center;
  justify-content: flex-end;
  font-size: 25.200px;
}
.apphead span { margin-top: -2px; -webkit-text-stroke: .3px currentColor; }
.sparks { width: 64px; height: 52px; margin-right: 16px; }
.running { width: 174px; color: #8f93a6; }
.stop { width: 106px; }
.deploy { width: 134px; }
article { padding: 89px 0 0 760px; }
h1 {
  margin: 0;
  font-size: 78.900px;
  line-height: 106px;
  font-weight: 700;
  -webkit-text-stroke: 1.400px #fafafa;
}
h2 {
  margin: 47px 0 32px;
  font-size: 50.500px;
  line-height: 68px;
  font-weight: 700;
  letter-spacing: -1.180px;
}
p {
  margin: 0 0 32px;
  height: 51.200px;
  line-height: 51.200px;
  font-size: 28.650px;
  -webkit-text-stroke: .35px #fafafa;
  display: flex;
  align-items: center;
}
.dot {
  width: 32px;
  height: 32px;
  margin: 1px 6.500px 0 0;
  border-radius: 50%;
  background: linear-gradient(#6cff40, #36cc05 30%, #2aa602 50%, #1c7a02);
  box-shadow: inset 0 0 2px 1px #1d7a05;
}
.dot.red {
  background: linear-gradient(#ff7a80, #e0222b 30%, #cc0009 50%, #8c0007);
  box-shadow: inset 0 0 2px 1px #99070d;
}
.scrollbar {
  position: absolute;
  right: 0;
  top: 116px;
  width: 12px;
  height: 1187px;
  border-radius: 0 0 6px 6px;
  background: #6b6c6e;
}
.buddy {
  position: absolute;
  left: 2876px;
  top: 1094px;
  width: 48px;
  height: 48px;
  border-radius: 6px;
  background: radial-gradient(circle at 0 0, #65666f 62%, #5c4a75 78%, #3c1470 100%);
}

/* desktop strip and dock */
.desk {
  flex: 1;
  padding-top: 2px;
  display: flex;
  justify-content: center;
  align-items: flex-start;
  background:
    linear-gradient(#3c3d45, #3c3d45) 190px 0 / 2px 100% no-repeat,
    linear-gradient(#34353c, #34353c) 572px 0 / 2px 100% no-repeat,
    linear-gradient(90deg, #020202, #17181c) 0 0 / 190px 100% no-repeat,
    linear-gradient(90deg, #0d0d0f, #000 180px) 192px 0 / 380px 100% no-repeat,
    #020202;
}
.dock {
  width: 2184px;
  height: 126px;
  border: 2px solid #363737;
  border-radius: 38px;
  background: #111312;
  padding: 17px 0 0 17px;
  display: flex;
  align-items: flex-start;
}
.app { position: relative; width: 78px; height: 78px; margin-right: 26px; flex: none; }
.app svg { width: 78px; height: 78px; }
.app.on::after {
  content: "";
  position: absolute;
  left: 35px;
  top: 95px;
  width: 8px;
  height: 8px;
  border-radius: 50%;
  background: #878787;
}
.div { width: 2px; height: 94px; margin-top: -3px; background: #3e3f3f; }
.div.a { margin-left: 9px; margin-right: 35px; }
.div.b { margin-left: 11px; margin-right: 32px; }
.trash { margin-right: 0; }
.trash svg { width: 78px; height: 90px; margin-top: -8px; }
.canva { font: italic bold 29px "Liberation Serif", serif; fill: #fff; }
.notion { font: bold 50px "Liberation Serif", serif; fill: #000; }
.jan { font: 600 16px Inter, sans-serif; fill: #fff; }
.day { font: 300 48px Inter, sans-serif; fill: #222; }
.pycharm { font: 600 27px Inter, sans-serif; fill: #fff; }
```
